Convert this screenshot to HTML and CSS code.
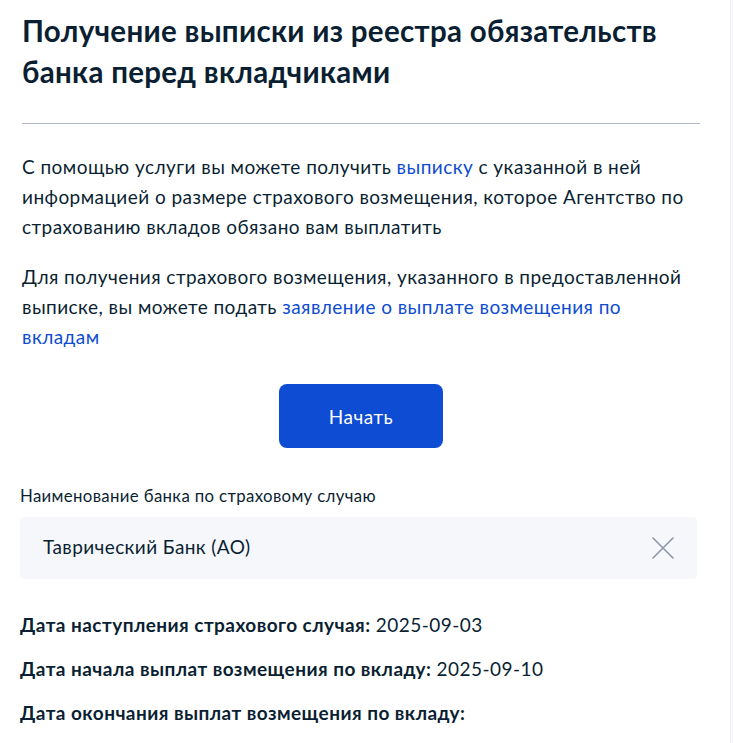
FILE: index.html
```html
<!DOCTYPE html>
<html lang="ru">
<head>
<meta charset="utf-8">
<title>Получение выписки</title>
<link rel="stylesheet" href="styles.css">
</head>
<body>
<main class="page">
  <section class="intro">
    <h1 class="title">Получение выписки из реестра обязательств банка перед вкладчиками</h1>
    <hr class="divider">
    <p class="text">С помощью услуги вы можете получить <a href="#" class="link">выписку</a> с указанной в ней информацией о размере страхового возмещения, которое Агентство по страхованию вкладов обязано вам выплатить</p>
    <p class="text">Для получения страхового возмещения, указанного в предоставленной выписке, вы можете подать <a href="#" class="link">заявление о выплате возмещения по вкладам</a></p>
    <div class="actions">
      <button class="btn" type="button">Начать</button>
    </div>
  </section>
  <section class="form">
    <label class="field-label">Наименование банка по страховому случаю</label>
    <div class="select">
      <span class="select-value">Таврический Банк (АО)</span>
      <svg class="clear" width="24" height="24" viewBox="0 0 24 24" aria-hidden="true"><path d="M2 2 L22 22 M22 2 L2 22" stroke="#8d96a8" stroke-width="1.6" stroke-linecap="round" fill="none"/></svg>
    </div>
    <p class="info"><b>Дата наступления страхового случая:</b> 2025-09-03</p>
    <p class="info"><b>Дата начала выплат возмещения по вкладу:</b> 2025-09-10</p>
    <p class="info"><b>Дата окончания выплат возмещения по вкладу:</b></p>
  </section>
</main>
</body>
</html>
```
FILE: styles.css
```css
html, body {
  margin: 0;
  padding: 0;
  background: #f7f8fa;
}
body {
  font-family: Lato, "Noto Sans", sans-serif;
  color: #0b1f33;
}
.page {
  width: 731px;
  min-height: 743px;
  box-sizing: border-box;
  background: #ffffff;
  border-right: 1px solid #eceff4;
}
.intro {
  padding: 10px 30px 0 22px;
}
.title {
  margin: 0;
  font-size: 29.5px;
  line-height: 41px;
  letter-spacing: 0.3px;
  font-weight: 700;
}
.divider {
  margin: 31px 0 28px;
  border: 0;
  height: 1px;
  background: #aeb6c8;
}
.text {
  margin: 0 0 20px;
  font-size: 19px;
  line-height: 30px;
  letter-spacing: 0.45px;
}
.link {
  color: #0d4cd3;
  text-decoration: none;
}
.actions {
  display: flex;
  justify-content: center;
  padding-top: 12px;
}
.btn {
  width: 164px;
  height: 64px;
  border: 0;
  border-radius: 8px;
  background: #0d4cd3;
  color: #ffffff;
  font-family: Lato, "Noto Sans", sans-serif;
  font-size: 19px;
  letter-spacing: 0.5px;
  font-weight: 400;
}
.form {
  padding: 36px 33px 0 20px;
}
.field-label {
  display: block;
  font-size: 16.8px;
  line-height: 24px;
  letter-spacing: 0.35px;
  margin-bottom: 9px;
}
.select {
  display: flex;
  align-items: center;
  justify-content: space-between;
  height: 62px;
  box-sizing: border-box;
  padding: 0 23px 0 23px;
  background: #f5f7fa;
  border-radius: 4px;
}
.select-value {
  font-size: 19px;
  line-height: 24px;
  letter-spacing: 0.4px;
  padding-bottom: 2px;
}
.clear {
  margin-right: -1px;
}
.info {
  margin: 20px 0 0;
  font-size: 19px;
  line-height: 24px;
  letter-spacing: 0.45px;
}
.select + .info {
  margin-top: 34px;
}
.info b {
  font-weight: 700;
}
```
